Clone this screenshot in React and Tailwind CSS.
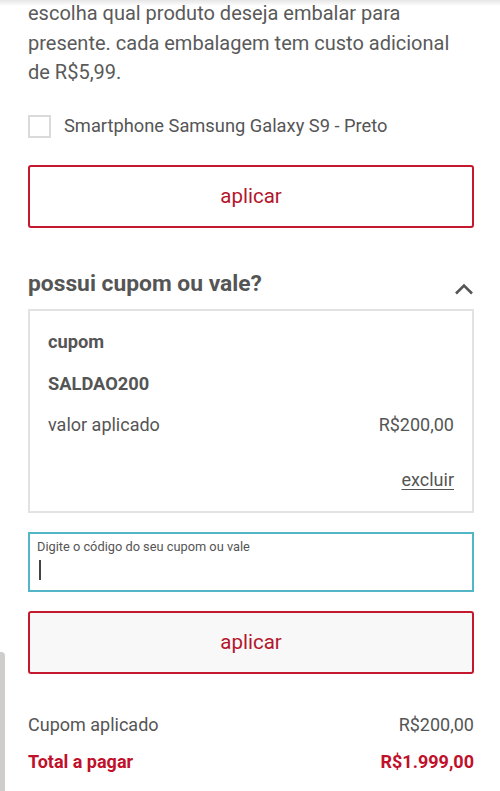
import React from "react";

const App = () => {
  return (
    <div
      className="relative w-[500px] h-[791px] overflow-hidden bg-white text-[#555]"
      style={{ fontFamily: "Roboto, 'Liberation Sans', sans-serif" }}
    >
      <div className="absolute top-0 left-0 right-0 h-[6px] bg-gradient-to-b from-black/10 to-transparent" />
      <div className="pl-[28px] pr-[26px] w-[500px]">
        <p className="-mt-[1px] text-[20px] leading-[29.5px] text-[#5a5a5a]">
          escolha qual produto deseja embalar para presente. cada embalagem tem custo adicional de R$5,99.
        </p>

        <label className="mt-[27px] flex items-center gap-[13px] h-[23px]">
          <span className="w-[23px] h-[23px] border-2 border-[#dadada] bg-white" />
          <span className="text-[18.3px] text-[#555]">Smartphone Samsung Galaxy S9 - Preto</span>
        </label>

        <button className="mt-[27px] w-full h-[63px] border-2 border-[#c4182f] rounded-[3px] bg-white text-[#b3162c] text-[20.5px]">
          aplicar
        </button>

        <div className="mt-[42px] h-[28px] flex items-start justify-between">
          <h2 className="text-[22.8px] font-bold text-[#555] leading-[28px]">possui cupom ou vale?</h2>
          <svg width="20" height="14" viewBox="0 0 20 14" className="mt-[12px]">
            <path d="M2 11.5 L10 3.5 L18 11.5" fill="none" stroke="#555" strokeWidth="2.6" />
          </svg>
        </div>

        <div className="mt-[11px] border-2 border-[#e2e2e2] h-[204px] px-[18px] pt-[18px]">
          <div className="text-[18.3px] font-bold text-[#555] leading-[26px]">cupom</div>
          <div className="mt-[16px] text-[18.3px] font-bold text-[#555] leading-[26px]">SALDAO200</div>
          <div className="mt-[15px] flex justify-between text-[18px] leading-[26px] text-[#555]">
            <span>valor aplicado</span>
            <span>R$200,00</span>
          </div>
          <div className="mt-[29px] text-right text-[18px] leading-[26px]">
            <span className="underline underline-offset-[3px]">excluir</span>
          </div>
        </div>

        <div className="mt-[19px] h-[60px] border-2 border-[#52b6c6] px-[7px] pt-[4px]">
          <div className="text-[12.8px] leading-[18px] text-[#555]">Digite o código do seu cupom ou vale</div>
          <div className="mt-[4px] ml-[2px] w-[2px] h-[20px] bg-[#444]" />
        </div>

        <button className="mt-[19px] w-full h-[63px] border-2 border-[#c4182f] rounded-[3px] bg-[#f8f8f8] text-[#b3162c] text-[20.5px]">
          aplicar
        </button>

        <div className="mt-[38px] flex justify-between text-[18px] leading-[26px] text-[#555]">
          <span>Cupom aplicado</span>
          <span>R$200,00</span>
        </div>
        <div className="mt-[11px] flex justify-between text-[18px] leading-[26px] font-bold text-[#c0102a]">
          <span>Total a pagar</span>
          <span>R$1.999,00</span>
        </div>
      </div>
      <div className="absolute left-0 top-[652px] w-[5px] h-[139px] bg-[#cfcdcb] rounded-tr-[4px]" />
    </div>
  );
};

export default App;
